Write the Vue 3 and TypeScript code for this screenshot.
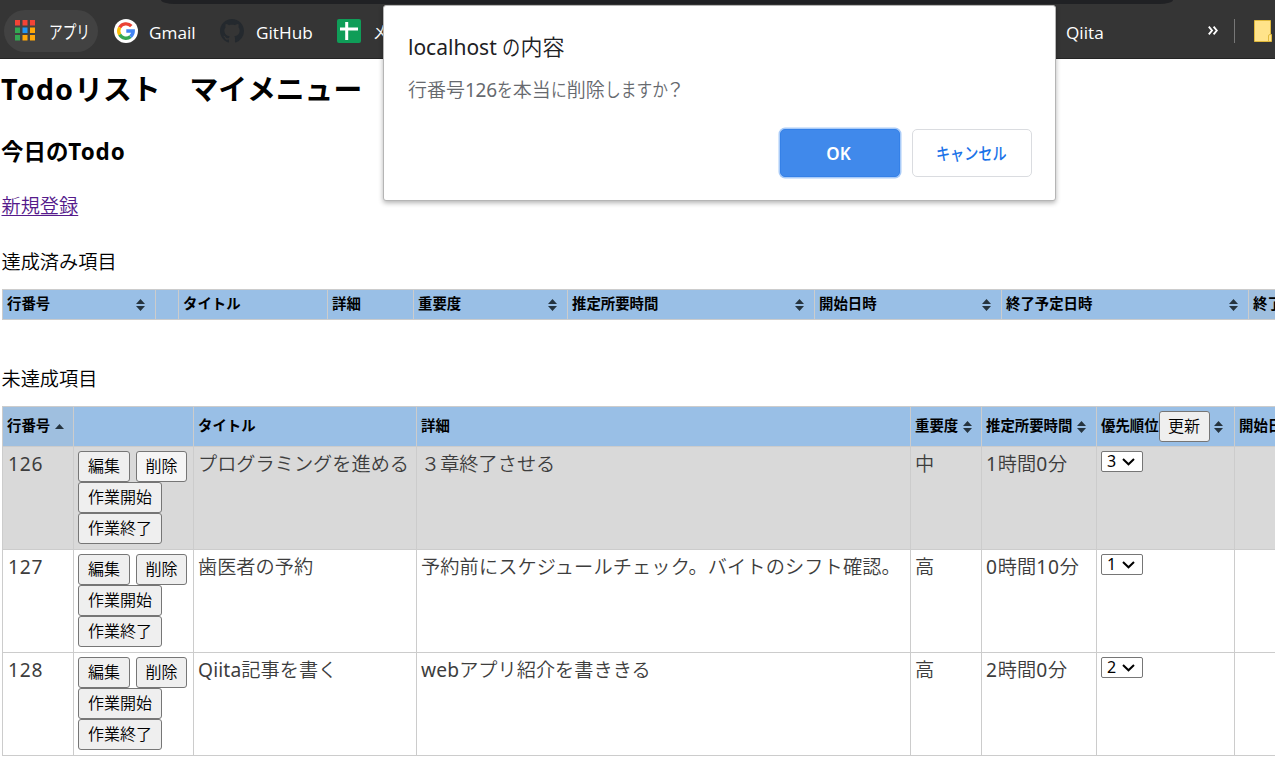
<script setup lang="ts">
import { ref } from 'vue'

interface Column {
  label: string
  sort?: 'both' | 'asc'
  sorted?: boolean
  update?: boolean
}
interface Todo {
  id: number
  title: string
  detail: string
  level: string
  estimate: string
  priority: number
}

const doneColumns: Column[] = [
  { label: '行番号', sort: 'both' },
  { label: '' },
  { label: 'タイトル' },
  { label: '詳細' },
  { label: '重要度', sort: 'both' },
  { label: '推定所要時間', sort: 'both' },
  { label: '開始日時', sort: 'both' },
  { label: '終了予定日時', sort: 'both' },
  { label: '終了日時', sorted: true },
]
const openColumns: Column[] = [
  { label: '行番号', sort: 'asc', sorted: true },
  { label: '' },
  { label: 'タイトル' },
  { label: '詳細' },
  { label: '重要度', sort: 'both' },
  { label: '推定所要時間', sort: 'both' },
  { label: '優先順位', sort: 'both', update: true },
  { label: '開始日時' },
]
const todos = ref<Todo[]>([
  { id: 126, title: 'プログラミングを進める', detail: '３章終了させる', level: '中', estimate: '1時間0分', priority: 3 },
  { id: 127, title: '歯医者の予約', detail: '予約前にスケジュールチェック。バイトのシフト確認。', level: '高', estimate: '0時間10分', priority: 1 },
  { id: 128, title: 'Qiita記事を書く', detail: 'webアプリ紹介を書ききる', level: '高', estimate: '2時間0分', priority: 2 },
])

const appColors = ['#f44336', '#f44336', '#f44336', '#34a853', '#2196f3', '#ffa80a', '#34a853', '#ffa80a', '#ffa80a']

/* Splits a text into Latin and Japanese runs so each can be spaced on its own. */
function runs(text: string): { text: string; latin: boolean }[] {
  return (text.match(/[\x21-\x7e]+|[^\x21-\x7e]+/g) ?? []).map((t) => ({ text: t, latin: /^[\x21-\x7e]/.test(t) }))
}
</script>

<template>
  <div class="screen">
    <header class="bookmarks">
      <div class="omnibox"></div>
      <div class="apps">
        <svg class="apps-icon" width="20" height="21" viewBox="0 0 20 21">
          <rect v-for="(c, i) in appColors" :key="i" :x="(i % 3) * 7.5" :y="Math.floor(i / 3) * 7.5" width="5" height="5.5" :fill="c" />
        </svg>
        <span class="kana">アプリ</span>
      </div>
      <svg class="google" width="24" height="24" viewBox="0 0 24 24">
        <circle cx="12" cy="12" r="12" fill="#fff" />
        <g fill="none" stroke-width="3.4">
          <path d="M17.3 7.2A7.2 7.2 0 0 0 5.7 8.5" stroke="#ea4335" />
          <path d="M5.7 8.5A7.2 7.2 0 0 0 5.7 15.6" stroke="#fbbc05" />
          <path d="M5.7 15.6A7.2 7.2 0 0 0 16.5 17.6" stroke="#34a853" />
          <path d="M16.5 17.6A7.2 7.2 0 0 0 19.2 12H12.3" stroke="#4285f4" />
        </g>
      </svg>
      <span class="mark gmail">Gmail</span>
      <svg class="github" width="24" height="24" viewBox="0 0 16 16">
        <path fill="#24292e" d="M8 0C3.58 0 0 3.58 0 8c0 3.54 2.29 6.53 5.47 7.59.4.07.55-.17.55-.38 0-.19-.01-.82-.01-1.49-2.01.37-2.53-.49-2.69-.94-.09-.23-.48-.94-.82-1.13-.28-.15-.68-.52-.01-.53.63-.01 1.08.58 1.23.82.72 1.21 1.87.87 2.33.66.07-.52.28-.87.51-1.07-1.78-.2-3.64-.89-3.64-3.95 0-.87.31-1.59.82-2.15-.08-.2-.36-1.02.08-2.12 0 0 .67-.21 2.2.82.64-.18 1.32-.27 2-.27s1.36.09 2 .27c1.53-1.04 2.2-.82 2.2-.82.44 1.1.16 1.92.08 2.12.51.56.82 1.27.82 2.15 0 3.07-1.87 3.75-3.65 3.95.29.25.54.73.54 1.48 0 1.07-.01 1.93-.01 2.2 0 .21.15.46.55.38A8.01 8.01 0 0 0 16 8c0-4.42-3.58-8-8-8z" />
      </svg>
      <span class="mark hub">GitHub</span>
      <svg class="sheet" width="24" height="24" viewBox="0 0 24 24">
        <rect width="24" height="24" rx="2" fill="#0f9d58" />
        <path d="M3 10H21M9.7 3V21" stroke="#fff" stroke-width="3" fill="none" />
      </svg>
      <span class="kana memo">メ</span>
      <span class="mark qiita">Qiita</span>
      <svg class="more" width="10" height="9" viewBox="0 0 10 9">
        <path d="M.8.7 4 4.5.8 8.3M5.6.7 8.8 4.5 5.6 8.3" fill="none" stroke="#fff" stroke-width="1.9" />
      </svg>
      <span class="divider"></span>
      <svg class="folder" width="18" height="22" viewBox="0 0 18 22">
        <path d="M.5.5H16.5V14.5H17.5V21.5H.5Z" fill="#ffe38a" stroke="#e0b93c" />
        <path d="M14.5 21V16Q14.5 14.5 16 14.5" fill="none" stroke="#e0b93c" />
      </svg>
    </header>

    <main>
      <h1><span class="lat">Todo</span>リスト　マイメニュー</h1>
      <h3>今日の<span class="lat">Todo</span></h3>
      <nav><a href="#">新規登録</a></nav>

      <p class="caption first">達成済み項目</p>
      <table class="done">
        <colgroup><col v-for="n in 9" :key="n" :class="'d' + n" /></colgroup>
        <thead>
          <tr>
            <th v-for="(c, i) in doneColumns" :key="i" :class="{ sorted: c.sorted }">
              <div class="head">
                <span>{{ c.label }}</span>
                <svg v-if="c.sort" width="9" height="12" viewBox="0 0 9 12"><path d="M0 5 4.5 0 9 5ZM0 7H9L4.5 12Z" /></svg>
              </div>
            </th>
          </tr>
        </thead>
      </table>

      <p class="caption second">未達成項目</p>
      <table class="open">
        <colgroup><col v-for="n in 8" :key="n" :class="'o' + n" /></colgroup>
        <thead>
          <tr>
            <th v-for="(c, i) in openColumns" :key="i" :class="{ sorted: c.sorted }">
              <div class="head">
                <span>{{ c.label }}</span>
                <button v-if="c.update" class="update">更新</button>
                <svg v-if="c.sort === 'both'" width="9" height="12" viewBox="0 0 9 12"><path d="M0 5 4.5 0 9 5ZM0 7H9L4.5 12Z" /></svg>
                <svg v-if="c.sort === 'asc'" width="9" height="5" viewBox="0 0 9 5"><path d="M0 5 4.5 0 9 5Z" /></svg>
              </div>
            </th>
          </tr>
        </thead>
        <tbody>
          <tr v-for="(t, i) in todos" :key="t.id" :class="{ hover: i === 0 }">
            <td><span class="num id">{{ t.id }}</span></td>
            <td>
              <div class="actions">
                <div class="pair"><button>編集</button><button class="delete">削除</button></div>
                <button class="wide">作業開始</button>
                <button class="wide">作業終了</button>
              </div>
            </td>
            <td><span v-for="(r, k) in runs(t.title)" :key="k" :class="{ word: r.latin }">{{ r.text }}</span></td>
            <td><span v-for="(r, k) in runs(t.detail)" :key="k" :class="{ word: r.latin, long: r.text.length > 20 }">{{ r.text }}</span></td>
            <td>{{ t.level }}</td>
            <td><span v-for="(r, k) in runs(t.estimate)" :key="k" :class="{ num: r.latin }">{{ r.text }}</span></td>
            <td>
              <div class="select">
                <span>{{ t.priority }}</span>
                <svg width="13" height="8" viewBox="0 0 13 8"><path d="M1 1 6.5 6.3 12 1" fill="none" stroke="#000" stroke-width="2" /></svg>
              </div>
            </td>
            <td></td>
          </tr>
        </tbody>
      </table>
    </main>

    <div class="dialog" role="dialog">
      <div class="dialog-title"><span class="host">localhost</span> <span class="narrow no">の</span><span>内容</span></div>
      <div class="dialog-text">行番号<span class="digits">126</span><span class="narrow one">を</span>本当<span class="narrow one">に</span>削除<span class="narrow four">しますか</span>？</div>
      <div class="dialog-buttons">
        <button class="ok">OK</button>
        <button class="cancel"><span class="narrow five">キャンセル</span></button>
      </div>
    </div>
  </div>
</template>

<style>
body { margin: 0; background: #fff; overflow: hidden; }
</style>

<style scoped>
.screen { position: relative; width: 1275px; height: 768px; overflow: hidden; background: #fff; color: #000; font: 350 19.2px "Noto Sans", "Noto Sans CJK JP", sans-serif; }
.bookmarks { position: relative; box-sizing: border-box; height: 59px; display: flex; align-items: center; padding: 3px 0 0 4px; background: #353535; border-bottom: 1px solid #242424; color: #fff; white-space: nowrap; }
.bookmarks > svg, .bookmarks > span { flex: none; }
.omnibox { position: absolute; left: 161px; top: 0; width: 1012px; height: 4px; background: #202124; border-radius: 0 0 14px 14px / 0 0 4px 4px; }
.apps { box-sizing: border-box; flex: none; display: flex; align-items: center; width: 94px; height: 42px; padding-left: 11px; border-radius: 21px; background: #424242; }
.apps-icon { flex: none; }
.kana { font-size: 18px; line-height: 24px; font-weight: 400; transform: scaleX(.76); transform-origin: 0 50%; }
.apps .kana { flex: none; margin-left: 14px; width: 41px; padding-top: 2px; }
.google { margin-left: 16px; }
.mark { font-family: "Open Sans", "Noto Sans"; font-size: 17.2px; font-weight: 400; line-height: 24px; padding-top: 4px; }
.gmail { width: 46px; margin-left: 11px; }
.github { margin-left: 25px; }
.hub { width: 57px; margin-left: 12px; }
.sheet { margin-left: 24px; }
.memo { width: 20px; margin-left: 12px; padding-top: 3px; }
.qiita { width: 39px; margin-left: 673px; }
.more { margin-left: 103px; }
.divider { width: 1px; height: 24px; margin-left: 16px; background: #777; }
.folder { margin-left: 19px; }

main { overflow: hidden; padding-left: 2px; }
h1, h3, p { margin: 0; }
h1 { height: 60px; line-height: 60px; font-size: 28.8px; font-weight: 700; }
h3 { height: 66px; line-height: 66px; font-size: 22.46px; font-weight: 700; }
h1, h3 { text-indent: -1px; }
nav, .caption { text-indent: -.5px; }
h1 .lat { letter-spacing: 1.1px; }
h3 .lat { letter-spacing: .9px; }
nav { height: 42px; line-height: 42px; }
a { color: #551a8b; text-decoration-thickness: 1px; text-underline-offset: 2px; }
.caption { height: 54px; line-height: 54px; }
.first { margin-top: 8px; }
.second { margin-top: 32px; }
table { table-layout: fixed; border-collapse: collapse; }
.done { width: 1361px; }
.open { width: 1383px; }
.d1 { width: 153px; } .d2 { width: 23px; } .d3 { width: 149px; } .d4 { width: 86px; } .d5 { width: 154px; }
.d6 { width: 247px; } .d7 { width: 187px; } .d8 { width: 247px; } .d9 { width: 114px; }
.o1 { width: 71px; } .o2 { width: 120px; } .o3 { width: 223px; } .o4 { width: 494px; } .o5 { width: 71px; }
.o6 { width: 115px; } .o7 { width: 138px; } .o8 { width: 150px; }
th, td { box-sizing: border-box; padding: 0 4px; border: 1px solid #ccc; white-space: nowrap; }
th { background: #99bfe6; font-size: 14.4px; font-weight: 700; text-align: left; }
th.sorted { background: #9fbfdf; }
.done th { height: 30px; }
.open th { height: 40px; }
.head { display: flex; align-items: center; justify-content: space-between; height: 28px; line-height: 26px; }
.head span { height: 28px; }
.done .head svg { margin-right: 6px; }
.open .head { justify-content: flex-start; }
.open .head svg { margin-left: 4.5px; flex: none; }
.head path { fill: #26343f; }
td { height: 103px; padding-top: 4px; vertical-align: top; line-height: 25px; color: #3d3d3d; }
.num { font-weight: 400; letter-spacing: .8px; }
.word { font-weight: 400; letter-spacing: .15px; }
.long { letter-spacing: .12px; }
.id { margin-left: 1px; }
.actions { display: flex; flex-direction: column; align-items: flex-start; }
.pair { display: flex; gap: 6px; }
button { box-sizing: border-box; width: 52px; height: 31px; padding: 0 0 1px; border: 1px solid #767676; border-radius: 3px; background: #efefef; color: #000; font: 350 16px/28px "Noto Sans", "Noto Sans CJK JP", sans-serif; }
.hover td { background: #d9d9d9; }
.delete { width: 51px; }
.hover .delete { background: #f5f5f5; }
.wide { width: 84px; }
.open .head .update { width: 51px; }
.select { box-sizing: border-box; display: flex; align-items: center; gap: 6px; width: 42px; height: 21px; padding-left: 5px; border: 1px solid #767676; border-radius: 2px; background: #fff; color: #000; font-size: 16px; font-weight: 400; line-height: 19px; }

.dialog { position: absolute; left: 383px; top: 5px; box-sizing: border-box; width: 673px; height: 196px; padding: 26px 23px 24px 24px; border: 1px solid #b5b5b5; border-radius: 3px; background: #fff; box-shadow: 0 2px 5px rgba(0, 0, 0, .3); white-space: nowrap; }
.dialog-title { height: 30px; line-height: 28px; font-size: 22px; color: #202124; }
.host { font-size: 21px; font-weight: 400; }
.dialog-text { height: 30px; margin-top: 13px; line-height: 30px; font-size: 19px; color: #66696e; }
.digits { font-weight: 400; letter-spacing: -.3px; }
.narrow { display: inline-block; transform: scaleX(.83); transform-origin: 0 50%; }
.no { width: 18px; }
.one { width: 16px; }
.four { width: 61px; }
.five { width: 71px; }
.dialog-buttons { display: flex; justify-content: flex-end; gap: 12px; margin-top: 24px; }
.dialog-buttons button { width: 120px; height: 48px; padding: 1px 1px 0 0; border-radius: 5px; font-size: 17px; font-weight: 600; }
.dialog-buttons .ok { padding: 1px 3px 0 0; background: #4089eb; border-color: #3581e8; color: #fff; box-shadow: 0 0 0 1.5px #a9cbf8; }
.dialog-buttons .cancel { background: #fff; border-color: #dadce0; color: #1a73e8; }
.cancel .five { font-weight: 500; }
</style>
